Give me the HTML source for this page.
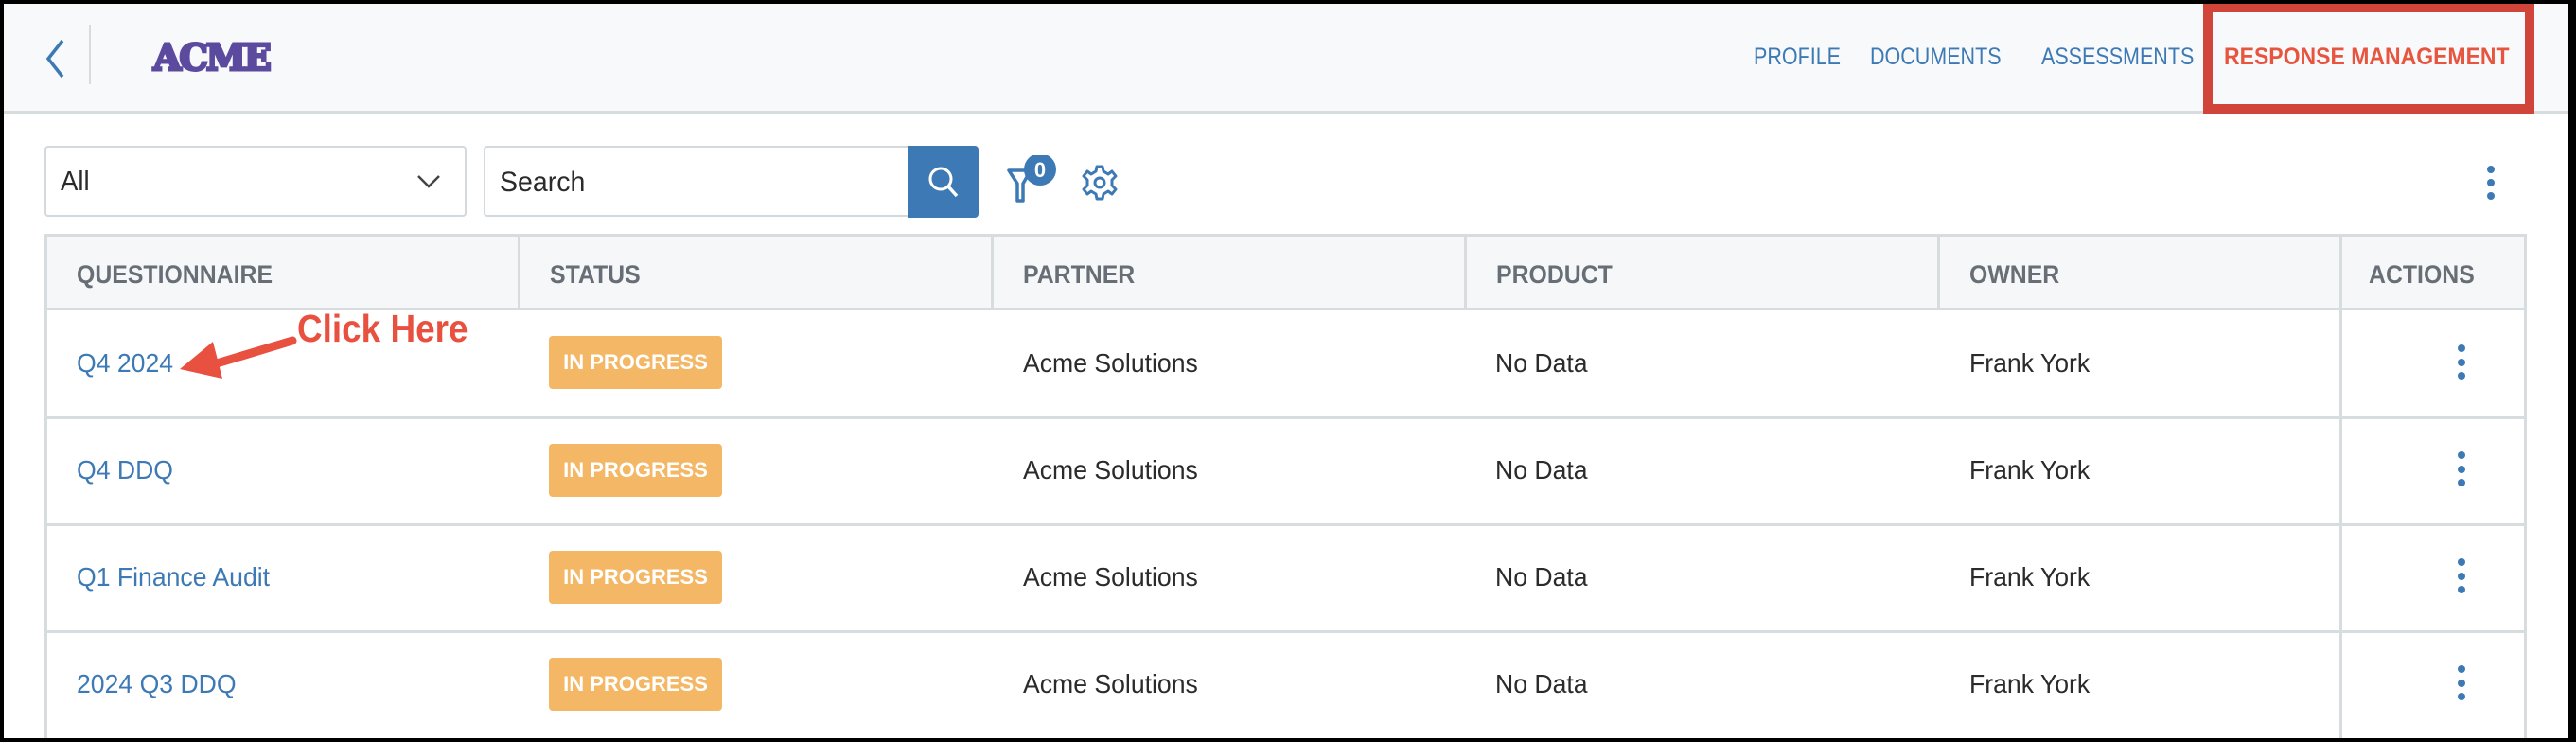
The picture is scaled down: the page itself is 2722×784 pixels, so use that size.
<!DOCTYPE html>
<html><head><meta charset="utf-8"><style>
*{box-sizing:border-box;margin:0;padding:0}
body{width:2722px;height:784px;background:#000;position:relative;overflow:hidden;font-family:"Liberation Sans",sans-serif}
#pg{position:absolute;left:4px;top:4px;width:2710px;height:776px;background:#fff;overflow:hidden}
.a{position:absolute}
.hdr{left:0;top:0;width:2710px;height:116px;background:#f8f9fb;border-bottom:3px solid #d7dcdf}
.nav{font-size:25px;color:#3d7ab5;top:42px;white-space:nowrap;transform:scaleX(0.86);transform-origin:left}
.th{font-size:27px;font-weight:bold;color:#676e76;top:271px;white-space:nowrap;transform:scaleX(0.92);transform-origin:left}
.td{font-size:28px;color:#2b2b2b;white-space:nowrap;transform:scaleX(0.95);transform-origin:left}
.lk{color:#3d7ab5}
.badge{background:#f3b765;color:#fff;font-size:22px;font-weight:bold;width:183px;height:56px;line-height:56px;text-align:center;border-radius:4px}
.dot{width:8px;height:8px;border-radius:50%;background:#3d7ab5}
.hl{height:3px;background:#d7dcdf;left:43px;width:2623px}
.vl{width:3px;background:#d7dcdf}
</style></head><body><div id="pg">
<div class="a hdr"></div>
<svg class="a" style="left:42px;top:36px" width="24" height="44"><path d="M20 3 L5 22 L20 41" fill="none" stroke="#3d7ab5" stroke-width="3.5"/></svg>
<div class="a" style="left:90px;top:22px;width:2px;height:63px;background:#d7dcdf"></div>
<div class="a" style="left:158px;top:34px;font-family:'DejaVu Serif',serif;font-weight:bold;font-size:38px;color:#5b4a9e;letter-spacing:-2px;-webkit-text-stroke:3px #5b4a9e">ACME</div>
<div class="a nav" style="left:1849px">PROFILE</div>
<div class="a nav" style="left:1972px">DOCUMENTS</div>
<div class="a nav" style="left:2153px">ASSESSMENTS</div>
<div class="a nav" style="left:2346px;color:#e8553f;font-weight:bold;font-size:25px;transform:scaleX(0.92)">RESPONSE MANAGEMENT</div>
<div class="a" style="left:2324px;top:-1px;width:350px;height:117px;border:10px solid #d0443a"></div>

<div class="a" style="left:43px;top:150px;width:446px;height:75px;border:2px solid #d4d9dd;border-radius:4px;background:#fff"></div>
<div class="a td" style="left:60px;top:172px;font-size:29px">All</div>
<svg class="a" style="left:436px;top:180px" width="26" height="16"><path d="M2 2 L13 13 L24 2" fill="none" stroke="#444" stroke-width="2.5"/></svg>
<div class="a" style="left:507px;top:150px;width:452px;height:75px;border:2px solid #d4d9dd;border-radius:4px 0 0 4px;background:#fff"></div>
<div class="a td" style="left:524px;top:172px;font-size:30px">Search</div>
<div class="a" style="left:955px;top:150px;width:75px;height:76px;background:#3d7ab5;border-radius:0 4px 4px 0"></div>
<svg class="a" style="left:975px;top:170px" width="36" height="38"><circle cx="15" cy="15" r="11" fill="none" stroke="#fff" stroke-width="3"/><path d="M23 23 L32 33" stroke="#fff" stroke-width="3.5"/></svg>
<svg class="a" style="left:1055px;top:160px" width="60" height="60"><path d="M7 16 H30 L22 30 V48 H16 V30 Z" fill="none" stroke="#3d7ab5" stroke-width="3.5" stroke-linejoin="round"/><circle cx="40" cy="15" r="17" fill="#3d7ab5"/><text x="40" y="23" font-size="22" font-weight="bold" fill="#fff" text-anchor="middle" font-family="Liberation Sans">0</text></svg>
<svg class="a" style="left:1137px;top:168px" width="42" height="42" viewBox="-21 -21 42 42"><path d="M-3 -17 H3 L4 -12 L9 -9 L13 -12 L17 -7 L13 -3 L13 3 L17 7 L13 12 L9 9 L4 12 L3 17 H-3 L-4 12 L-9 9 L-13 12 L-17 7 L-13 3 L-13 -3 L-17 -7 L-13 -12 L-9 -9 L-4 -12 Z" fill="none" stroke="#3d7ab5" stroke-width="3" stroke-linejoin="round"/><circle r="5" fill="none" stroke="#3d7ab5" stroke-width="3"/></svg>
<div class="a dot" style="left:2624px;top:171px"></div><div class="a dot" style="left:2624px;top:185px"></div><div class="a dot" style="left:2624px;top:199px"></div>

<div class="a" style="left:43px;top:243px;width:2623px;height:80px;background:#f5f7f9"></div>
<div class="a hl" style="top:243px"></div>
<div class="a hl" style="top:321px"></div>
<div class="a hl" style="top:436px"></div>
<div class="a hl" style="top:549px"></div>
<div class="a hl" style="top:662px"></div>
<div class="a vl" style="left:43px;top:243px;height:540px"></div>
<div class="a vl" style="left:2663px;top:243px;height:540px"></div>
<div class="a vl" style="left:2468px;top:243px;height:540px"></div>
<div class="a vl" style="left:543px;top:243px;height:80px"></div>
<div class="a vl" style="left:1043px;top:243px;height:80px"></div>
<div class="a vl" style="left:1543px;top:243px;height:80px"></div>
<div class="a vl" style="left:2043px;top:243px;height:80px"></div>
<div class="a th" style="left:77px">QUESTIONNAIRE</div>
<div class="a th" style="left:577px">STATUS</div>
<div class="a th" style="left:1077px">PARTNER</div>
<div class="a th" style="left:1577px">PRODUCT</div>
<div class="a th" style="left:2077px">OWNER</div>
<div class="a th" style="left:2499px">ACTIONS</div>

<div class="a td lk" style="left:77px;top:364px">Q4 2024</div>
<div class="a badge" style="left:576px;top:351px">IN PROGRESS</div>
<div class="a td" style="left:1077px;top:364px">Acme Solutions</div>
<div class="a td" style="left:1576px;top:364px">No Data</div>
<div class="a td" style="left:2077px;top:364px">Frank York</div>
<div class="a dot" style="left:2593px;top:360px"></div><div class="a dot" style="left:2593px;top:375px"></div><div class="a dot" style="left:2593px;top:389px"></div>

<div class="a td lk" style="left:77px;top:477px">Q4 DDQ</div>
<div class="a badge" style="left:576px;top:465px">IN PROGRESS</div>
<div class="a td" style="left:1077px;top:477px">Acme Solutions</div>
<div class="a td" style="left:1576px;top:477px">No Data</div>
<div class="a td" style="left:2077px;top:477px">Frank York</div>
<div class="a dot" style="left:2593px;top:473px"></div><div class="a dot" style="left:2593px;top:488px"></div><div class="a dot" style="left:2593px;top:502px"></div>

<div class="a td lk" style="left:77px;top:590px">Q1 Finance Audit</div>
<div class="a badge" style="left:576px;top:578px">IN PROGRESS</div>
<div class="a td" style="left:1077px;top:590px">Acme Solutions</div>
<div class="a td" style="left:1576px;top:590px">No Data</div>
<div class="a td" style="left:2077px;top:590px">Frank York</div>
<div class="a dot" style="left:2593px;top:586px"></div><div class="a dot" style="left:2593px;top:601px"></div><div class="a dot" style="left:2593px;top:615px"></div>

<div class="a td lk" style="left:77px;top:703px">2024 Q3 DDQ</div>
<div class="a badge" style="left:576px;top:691px">IN PROGRESS</div>
<div class="a td" style="left:1077px;top:703px">Acme Solutions</div>
<div class="a td" style="left:1576px;top:703px">No Data</div>
<div class="a td" style="left:2077px;top:703px">Frank York</div>
<div class="a dot" style="left:2593px;top:699px"></div><div class="a dot" style="left:2593px;top:714px"></div><div class="a dot" style="left:2593px;top:728px"></div>

<div class="a" style="left:310px;top:320px;font-size:41px;font-weight:bold;color:#e8513f;transform:scaleX(0.9);transform-origin:left;white-space:nowrap">Click Here</div>
<svg class="a" style="left:0;top:0" width="600" height="500"><path d="M305 356 L215 383" stroke="#e8513f" stroke-width="9" stroke-linecap="round"/><path d="M186 386 L221 357 L231 396 Z" fill="#e8513f"/></svg>
</div></body></html>
